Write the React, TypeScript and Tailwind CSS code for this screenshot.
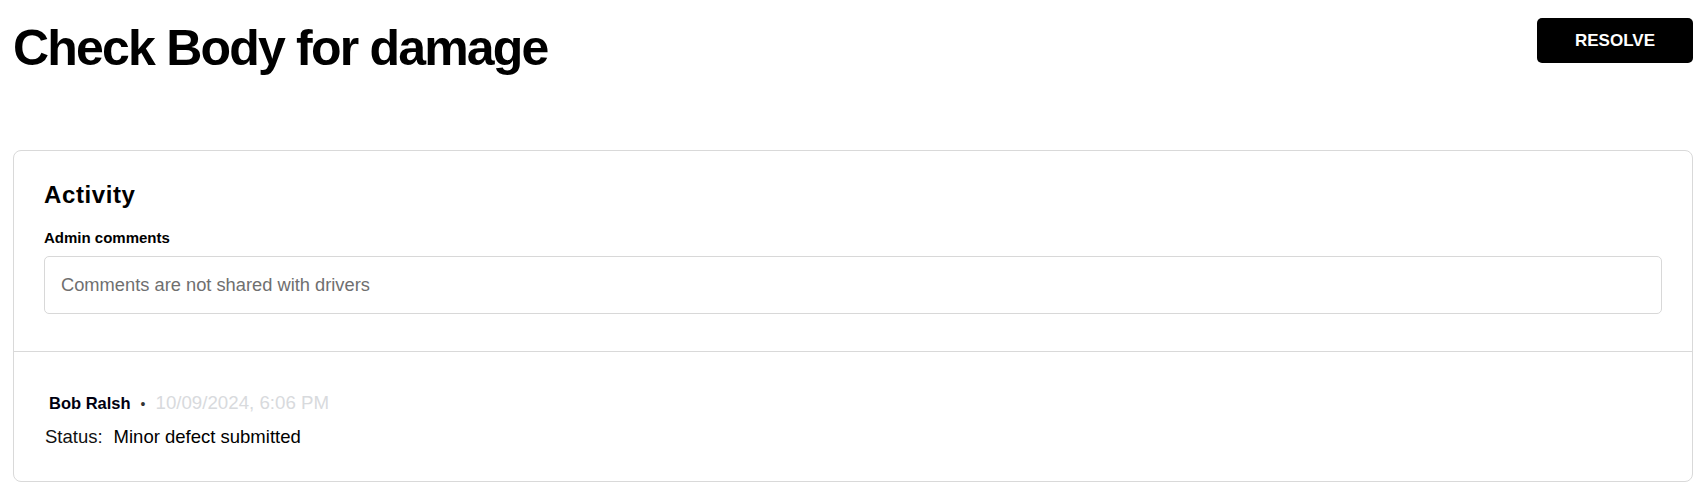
export default function App() {
  return (
    <div className="min-h-[496px] bg-white pl-[13px] pr-[15px] pt-[18px] font-['Liberation_Sans',Arial,sans-serif] text-black">
      {/* Header */}
      <div className="flex items-start justify-between">
        <h1 className="mt-[5px] text-[50px] font-bold leading-[50px] tracking-[-1.8px]">
          Check Body for damage
        </h1>
        <button className="h-[45px] w-[156px] rounded-[5px] bg-black text-[17px] font-bold text-white">
          RESOLVE
        </button>
      </div>

      {/* Activity card */}
      <section className="mt-[77px] rounded-[8px] border border-[#d9d9d9]">
        <div className="px-[30px] pt-[28px] pb-[37px]">
          <h2 className="text-[24px] font-bold leading-[32px] tracking-[0.6px]">Activity</h2>
          <label className="mt-[17px] block text-[15px] font-bold leading-[20px]">Admin comments</label>
          <input
            className="mt-[8px] h-[58px] w-full rounded-[5px] border border-[#d8d8d8] px-[16px] text-[18.3px] outline-none placeholder:text-[#6f6f6f]"
            placeholder="Comments are not shared with drivers"
          />
        </div>

        <div className="border-t border-[#d9d9d9] px-[31px] pt-[37px] pb-[30px]">
          <div className="flex items-baseline pl-[4px] leading-[28px]">
            <span className="text-[16.5px] font-bold text-[#000010]">Bob Ralsh</span>
            <span className="mx-[10px] text-[14px] text-[#333]">•</span>
            <span className="text-[18.7px] text-[#d8dadd]">10/09/2024, 6:06 PM</span>
          </div>
          <div className="mt-[5px] flex items-baseline text-[18.5px] leading-[28px]">
            <span className="text-[#111]">Status:</span>
            <span className="ml-[11px]">Minor defect submitted</span>
          </div>
        </div>
      </section>
    </div>
  );
}
